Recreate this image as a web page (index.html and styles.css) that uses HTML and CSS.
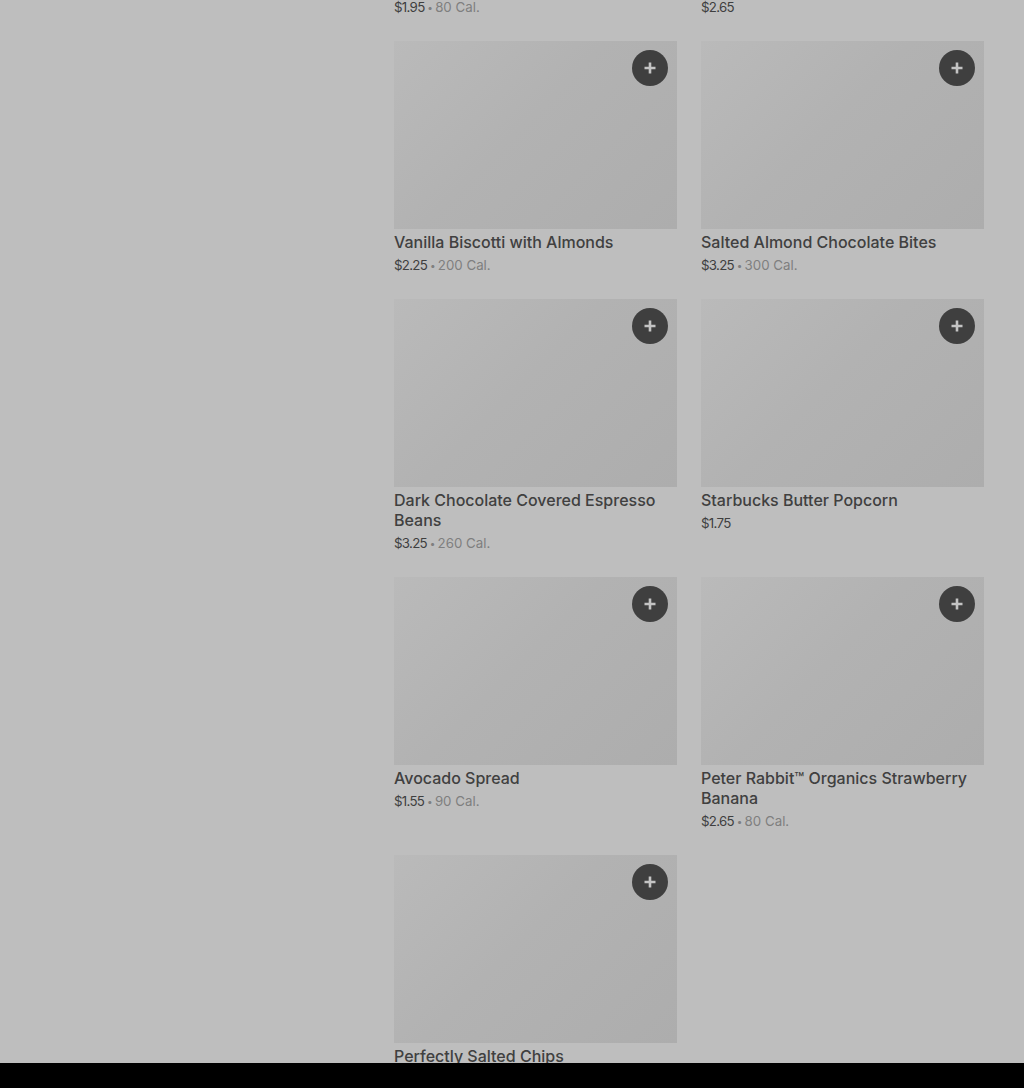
FILE: index.html
```html
<!DOCTYPE html>
<html lang="en">
<head>
  <meta charset="UTF-8" />
  <meta name="viewport" content="width=device-width, initial-scale=1.0">
  <title>Snacks</title>
  <link rel="stylesheet" href="styles.css">
</head>
<body>

  <main class="menu">
    <div class="menu-grid">
      <div class="item item-cut">
        <div class="price"><span>$1.95</span> <i>•</i> <em>80 Cal.</em></div>
      </div>
      <div class="item item-cut">
        <div class="price"><span>$2.65</span></div>
      </div>

      <div class="item">
        <div class="thumb"><button class="add"><svg viewBox="0 0 12 12"><path d="M6 0.5v11M0.5 6h11"/></svg></button></div>
        <h3>Vanilla Biscotti with Almonds</h3>
        <div class="price"><span>$2.25</span> <i>•</i> <em>200 Cal.</em></div>
      </div>
      <div class="item">
        <div class="thumb"><button class="add"><svg viewBox="0 0 12 12"><path d="M6 0.5v11M0.5 6h11"/></svg></button></div>
        <h3>Salted Almond Chocolate Bites</h3>
        <div class="price"><span>$3.25</span> <i>•</i> <em>300 Cal.</em></div>
      </div>

      <div class="item">
        <div class="thumb"><button class="add"><svg viewBox="0 0 12 12"><path d="M6 0.5v11M0.5 6h11"/></svg></button></div>
        <h3>Dark Chocolate Covered Espresso Beans</h3>
        <div class="price"><span>$3.25</span> <i>•</i> <em>260 Cal.</em></div>
      </div>
      <div class="item">
        <div class="thumb"><button class="add"><svg viewBox="0 0 12 12"><path d="M6 0.5v11M0.5 6h11"/></svg></button></div>
        <h3>Starbucks Butter Popcorn</h3>
        <div class="price"><span>$1.75</span></div>
      </div>

      <div class="item">
        <div class="thumb"><button class="add"><svg viewBox="0 0 12 12"><path d="M6 0.5v11M0.5 6h11"/></svg></button></div>
        <h3>Avocado Spread</h3>
        <div class="price"><span>$1.55</span> <i>•</i> <em>90 Cal.</em></div>
      </div>
      <div class="item">
        <div class="thumb"><button class="add"><svg viewBox="0 0 12 12"><path d="M6 0.5v11M0.5 6h11"/></svg></button></div>
        <h3>Peter Rabbit™ Organics Strawberry Banana</h3>
        <div class="price"><span>$2.65</span> <i>•</i> <em>80 Cal.</em></div>
      </div>

      <div class="item">
        <div class="thumb"><button class="add"><svg viewBox="0 0 12 12"><path d="M6 0.5v11M0.5 6h11"/></svg></button></div>
        <h3>Perfectly Salted Chips</h3>
      </div>
    </div>
  </main>

  <div class="bottom-bar"></div>

</body>
</html>
```

FILE: styles.css
```css
html, body {
  height: 100%;
}

body {
  margin: 0;
  background-color: #bebebe;
  font-family: 'Inter', 'Liberation Sans', sans-serif;
  overflow: hidden;
}

.menu {
  padding-left: 394px;
  margin-top: -3px;
}

.menu-grid {
  display: grid;
  grid-template-columns: 283px 283px;
  column-gap: 24px;
}

.item {
  padding-bottom: 24px;
}

.thumb {
  position: relative;
  height: 188px;
  background: linear-gradient(135deg, #bababa 0%, #b2b2b2 45%, #adadad 100%);
}

.add {
  position: absolute;
  top: 9px;
  right: 9px;
  width: 36px;
  height: 36px;
  padding: 0;
  border: none;
  border-radius: 50%;
  background-color: #3f3f3f;
  display: flex;
  align-items: center;
  justify-content: center;
}

.add svg {
  width: 12px;
  height: 12px;
  fill: none;
  stroke: #c4c4c4;
  stroke-width: 2.6;
}

h3 {
  margin: 3px 0 0;
  font-size: 16px;
  line-height: 20px;
  font-weight: 500;
  color: #404040;
}

.price {
  margin-top: 3px;
  font-size: 13.3px;
  line-height: 20px;
  color: #7f7f7f;
}

.item-cut .price {
  margin-top: 0;
}

.price span {
  color: #3f3f3f;
  letter-spacing: -0.7px;
}

.price i {
  font-style: normal;
  font-size: 10px;
  line-height: 0;
  vertical-align: 1px;
  margin: 0 -1.5px 0 -1px;
}

.price em {
  font-style: normal;
}

.bottom-bar {
  position: fixed;
  left: 0;
  right: 0;
  bottom: 0;
  height: 25px;
  background-color: #000;
}
```
